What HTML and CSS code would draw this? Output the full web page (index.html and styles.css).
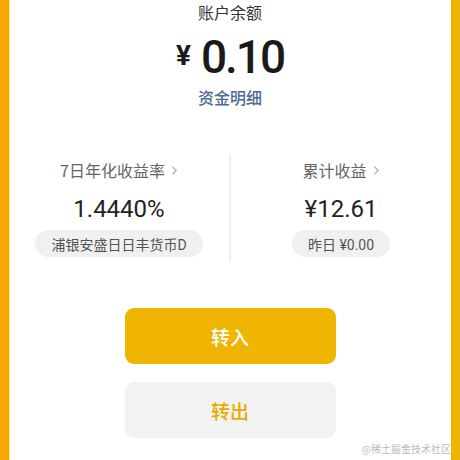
FILE: index.html
```html
<!DOCTYPE html>
<html lang="zh">
<head>
<meta charset="utf-8">
<link rel="stylesheet" href="styles.css">
</head>
<body>
<div class="page">
  <div class="strip strip-left"></div>
  <main class="main">
    <div class="title">账户余额</div>
    <div class="amount"><span class="yen">¥</span><span class="num">0.10</span></div>
    <div class="detail">资金明细</div>
    <section class="stats">
      <div class="col">
        <div class="label">7日年化收益率<svg class="chev" viewBox="0 0 8 12" width="7" height="11"><path d="M1.5 1.5 L6 6 L1.5 10.5" fill="none" stroke="#aaa" stroke-width="1.3"/></svg></div>
        <div class="value">1.4440%</div>
        <div class="pill">浦银安盛日日丰货币D</div>
      </div>
      <div class="divider"></div>
      <div class="col">
        <div class="label">累计收益<svg class="chev" viewBox="0 0 8 12" width="7" height="11"><path d="M1.5 1.5 L6 6 L1.5 10.5" fill="none" stroke="#aaa" stroke-width="1.3"/></svg></div>
        <div class="value">¥12.61</div>
        <div class="pill">昨日 ¥0.00</div>
      </div>
    </section>
    <div class="actions">
      <button class="btn btn-in">转入</button>
      <button class="btn btn-out">转出</button>
    </div>
    <div class="watermark">@稀土掘金技术社区</div>
  </main>
  <div class="strip strip-right"></div>
</div>
</body>
</html>
```

FILE: styles.css
```css
* { box-sizing: border-box; }
html, body { margin: 0; padding: 0; background: #fff; }
body {
  font-family: Roboto, "Noto Sans CJK SC", sans-serif;
  color: #222;
}
.page {
  display: flex;
  width: 460px;
  height: 460px;
  overflow: hidden;
}
.strip { width: 9px; flex: none; }
.strip-left { background: #f5a800; box-shadow: 1px 0 0 #fbe3a4; }
.strip-right { background: #efb300; }
.main {
  flex: 1;
  position: relative;
  display: flex;
  flex-direction: column;
  align-items: center;
}
.title {
  font-family: "Noto Sans CJK SC", sans-serif;
  font-size: 16px;
  line-height: 24px;
  color: #333;
}
.amount {
  margin-top: 6px;
  height: 54px;
  display: flex;
  align-items: center;
  color: #1a1a1a;
}
.yen {
  font-size: 28px;
  font-weight: 700;
  margin-right: 10px;
  margin-top: -4px;
}
.num {
  font-size: 46px;
  font-weight: 500;
  letter-spacing: -2px;
}
.detail {
  margin-top: 1px;
  font-family: "Noto Sans CJK SC", sans-serif;
  font-size: 16px;
  line-height: 24px;
  font-weight: 500;
  color: #4d6a92;
}
.stats {
  margin-top: 45px;
  width: 100%;
  display: flex;
}
.col {
  flex: 1;
  display: flex;
  flex-direction: column;
  align-items: center;
}
.divider {
  width: 2px;
  height: 108px;
  background: #f0f0f0;
}
.label {
  margin-top: 4px;
  display: flex;
  align-items: center;
  gap: 6px;
  font-family: "Noto Sans CJK SC", sans-serif;
  font-size: 16px;
  line-height: 24px;
  color: #666;
}
.value {
  margin-top: 12px;
  font-size: 24px;
  line-height: 30px;
  color: #222;
}
.pill {
  margin-top: 6px;
  height: 27px;
  padding: 0 16px;
  border-radius: 14px;
  background: #f0f0f0;
  display: flex;
  align-items: center;
  font-family: Roboto, "Noto Sans CJK SC", sans-serif;
  font-size: 14px;
  color: #555;
}
.actions {
  margin-top: 46px;
  display: flex;
  flex-direction: column;
  gap: 18px;
}
.btn {
  width: 211px;
  height: 56px;
  border: none;
  border-radius: 9px;
  font-family: "Noto Sans CJK SC", sans-serif;
  font-size: 19px;
  font-weight: 500;
  padding: 0;
}
.btn-in { background: #efb500; color: #fff; }
.btn-out { background: #f2f2f2; color: #e9a900; }
.watermark {
  position: absolute;
  right: 0;
  bottom: 4px;
  font-family: "Noto Sans CJK SC", sans-serif;
  font-size: 10px;
  color: #bbb;
}
```
